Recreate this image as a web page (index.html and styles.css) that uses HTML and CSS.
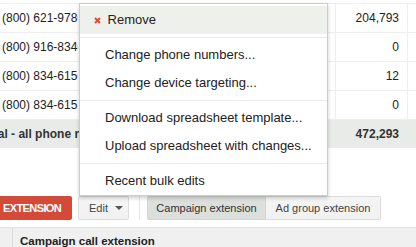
FILE: index.html
```html
<!DOCTYPE html>
<html lang="en">
<head>
    <meta charset="UTF-8">
    <title>Call extensions</title>
    <link rel="stylesheet" href="styles.css">
</head>
<body>
    <div class="grid">
        <div class="row"><div class="c-name">(800) 621-9780</div><div class="c-gap"></div><div class="c-num">204,793</div><div class="c-end"></div></div>
        <div class="row"><div class="c-name">(800) 916-8340</div><div class="c-gap"></div><div class="c-num">0</div><div class="c-end"></div></div>
        <div class="row"><div class="c-name">(800) 834-6150</div><div class="c-gap"></div><div class="c-num">12</div><div class="c-end"></div></div>
        <div class="row"><div class="c-name">(800) 834-6151</div><div class="c-gap"></div><div class="c-num">0</div><div class="c-end"></div></div>
        <div class="row total"><div class="c-name wide"><span class="cut">Total - all phone numbers</span></div><div class="c-num">472,293</div><div class="c-end"></div></div>
    </div>

    <div class="toolbar">
        <button class="btn-red">EXTENSION</button>
        <button class="btn edit">Edit <span class="caret"></span></button>
        <span class="divider"></span>
        <div class="seg">
            <button class="btn on">Campaign extension</button>
            <button class="btn">Ad group extension</button>
        </div>
    </div>

    <div class="thead">
        <div class="chk"></div>
        <div class="th">Campaign call extension</div>
    </div>

    <div class="menu">
        <div class="item hover">
            <svg class="x" width="7" height="7" viewBox="0 0 7 7"><path d="M1 1L6 6M6 1L1 6" stroke="#dd4b39" stroke-width="2"/></svg>
            Remove
        </div>
        <div class="sep"></div>
        <div class="item">Change phone numbers...</div>
        <div class="item">Change device targeting...</div>
        <div class="sep"></div>
        <div class="item">Download spreadsheet template...</div>
        <div class="item">Upload spreadsheet with changes...</div>
        <div class="sep"></div>
        <div class="item">Recent bulk edits</div>
    </div>
</body>
</html>
```

FILE: styles.css
```css
body {
    margin: 0;
    font-family: "Liberation Sans", Arial, sans-serif;
    color: #222;
    background: #fff;
    width: 416px;
    height: 247px;
    overflow: hidden;
    position: relative;
}
.grid {
    margin-top: 3px;
    border-top: 1px solid #efefef;
}
.row {
    display: flex;
    height: 28px;
    border-bottom: 1px solid #efefef;
    font-size: 12px;
    line-height: 28px;
}
.c-name {
    width: 76px;
    padding-left: 2px;
    white-space: nowrap;
    overflow: hidden;
}
.c-name.wide {
    width: 333px;
}
.c-gap {
    width: 257px;
}
.c-num {
    width: 63px;
    padding-right: 8px;
    text-align: right;
    border-left: 1px solid #efefef;
}
.c-end {
    flex: 1;
    border-left: 1px solid #efefef;
}
.total {
    background: #e9ebe9;
    font-weight: bold;
    color: #333;
    border-bottom: none;
}
.total .c-num, .total .c-end {
    border-left-color: transparent;
}
.cut {
    margin-left: -22px;
}
.toolbar {
    display: flex;
    align-items: center;
    margin-top: 48px;
    height: 24px;
}
button {
    font-family: inherit;
    cursor: pointer;
    white-space: nowrap;
}
.btn-red {
    width: 72px;
    height: 24px;
    border: none;
    border-radius: 0 2px 2px 0;
    background: #d44a38;
    color: #fff;
    font-weight: bold;
    font-size: 11px;
    letter-spacing: -0.6px;
    text-align: left;
    padding: 0 0 0 3px;
}
.btn {
    height: 24px;
    border: 1px solid #dcdcdc;
    border-radius: 2px;
    background: linear-gradient(#f5f5f5, #f1f1f1);
    color: #444;
    font-size: 11px;
    padding: 0;
    text-align: center;
}
.edit {
    margin-left: 6px;
    width: 51px;
    text-align: left;
    padding-left: 10px;
}
.caret {
    display: inline-block;
    margin-left: 4px;
    vertical-align: 2px;
    border-left: 4px solid transparent;
    border-right: 4px solid transparent;
    border-top: 4px solid #555;
}
.divider {
    width: 1px;
    height: 24px;
    background: #e5e5e5;
    margin: 0 7px 0 10px;
}
.seg {
    display: flex;
}
.seg .btn:first-child {
    width: 119px;
    border-radius: 2px 0 0 2px;
}
.seg .btn:last-child {
    width: 115px;
    border-left: none;
    border-radius: 0 2px 2px 0;
}
.seg .on {
    background: #dcdfdb;
    border-color: #d3d6d2;
    color: #333;
}
.thead {
    display: flex;
    margin-top: 7px;
    height: 21px;
    background: #f0f0f0;
    border-top: 1px solid #e2e2e2;
}
.chk {
    width: 12px;
    border-right: 1px solid #dcdcdc;
}
.th {
    padding: 7px 0 0 7px;
    font-size: 11.5px;
    font-weight: bold;
    color: #222;
}
.menu {
    position: absolute;
    left: 79px;
    top: 3px;
    width: 249px;
    box-sizing: border-box;
    background: #fff;
    border: 1px solid rgba(0, 0, 0, 0.2);
    box-shadow: 0 2px 4px rgba(0, 0, 0, 0.2);
    padding: 2px 0 0;
    font-size: 13px;
}
.item {
    height: 28px;
    line-height: 28px;
    padding-left: 25px;
    color: #222;
    white-space: nowrap;
}
.item.hover {
    background: #eef0ec;
    padding-left: 14px;
}
.x {
    margin-right: 3px;
    vertical-align: 0;
}
.sep {
    height: 1px;
    background: #ebebeb;
    margin: 3px 0;
}
```
